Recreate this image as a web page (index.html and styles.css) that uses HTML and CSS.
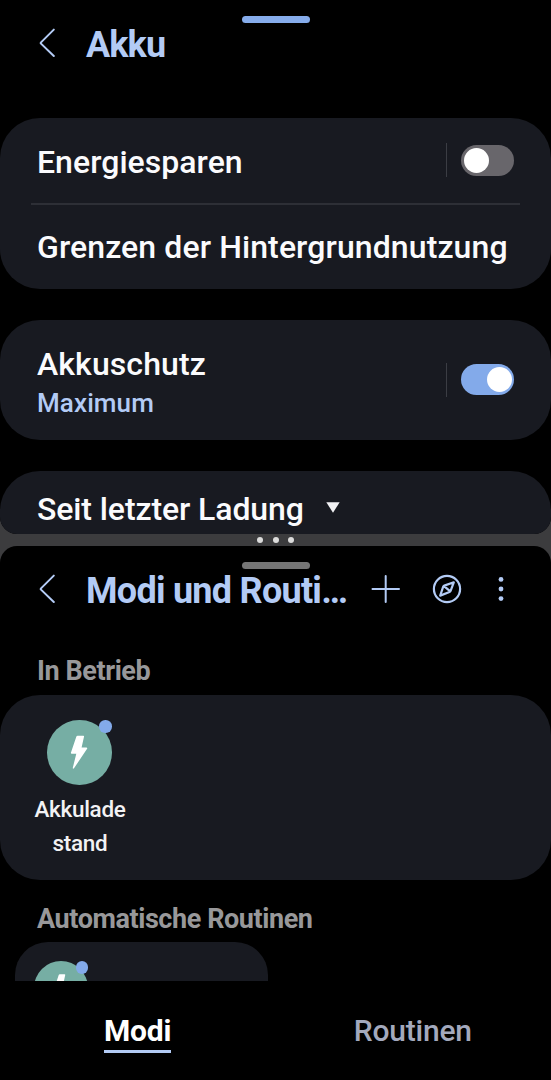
FILE: index.html
```html
<!DOCTYPE html>
<html lang="de">
<head>
<meta charset="utf-8">
<title>Akku</title>
<link rel="stylesheet" href="styles.css">
</head>
<body>
<div class="screen">
  <section class="pane pane-top">
    <span class="handle handle-active"></span>
    <header class="bar">
      <svg class="back" width="16" height="30" viewBox="0 0 16 30"><path d="M14.8 1.6 2 14.4Q1.4 15 2 15.6L14.8 28"/></svg>
      <h1 class="title title-akku">Akku</h1>
    </header>
    <div class="card power">
      <div class="row row-save">
        <span class="label saving">Energiesparen</span>
        <span class="control"><i class="toggle"></i></span>
      </div>
      <div class="row row-limits"><span class="label limits">Grenzen der Hintergrundnutzung</span></div>
    </div>
    <div class="card protect">
      <div class="stack">
        <span class="label protect-label">Akkuschutz</span>
        <span class="value">Maximum</span>
      </div>
      <span class="control"><i class="toggle on"></i></span>
    </div>
    <div class="card usage">
      <span class="label charge">Seit letzter Ladung</span>
      <svg class="caret" width="14" height="12" viewBox="0 0 14 12"><path d="M.3.3h13.4L7 10.7Z"/></svg>
    </div>
  </section>
  <div class="divider"><i></i><i></i><i></i></div>
  <section class="pane pane-bottom">
    <span class="handle"></span>
    <header class="bar bar-modes">
      <svg class="back" width="16" height="30" viewBox="0 0 16 30"><path d="M14.8 1.6 2 14.4Q1.4 15 2 15.6L14.8 28"/></svg>
      <h1 class="title title-modes">Modi und Routi…</h1>
      <svg class="plus" width="30" height="30" viewBox="0 0 30 30"><path d="M14.7 2v26M1.5 15h26.5"/></svg>
      <svg class="compass" width="30" height="30" viewBox="0 0 30 30"><circle cx="15" cy="15" r="13.1"/><path d="M21.8 8.3 18.6 16.8Q18.3 17.6 17.5 18L8.2 21.6 11.2 12.7Q11.5 11.9 12.3 11.6ZM12 12.2 18 17.2"/></svg>
      <svg class="more" width="6" height="26" viewBox="0 0 6 26"><circle cx="3" cy="3.4" r="2.4"/><circle cx="3" cy="13" r="2.4"/><circle cx="3" cy="22.6" r="2.4"/></svg>
    </header>
    <main class="content">
      <h2 class="heading running">In Betrieb</h2>
      <div class="card modes">
        <div class="mode">
          <span class="badge"><svg width="64" height="64" viewBox="0 0 64 64"><path d="M30.6 15.8h5.8q.9 0 .6.9L34.6 27.6h4.9q1.2 0 .6 1.1L27 48.3q-1.3 1-1.2-.6L29.3 33.8h-4.6q-1 0-.8-1.1L29.3 16.7q.3-.9 1.3-.9Z"/></svg><i class="dot"></i></span>
          <span class="mode-name">Akkulade<br>stand</span>
        </div>
      </div>
      <h2 class="heading automatic">Automatische Routinen</h2>
      <div class="card routine">
        <span class="badge small"><svg width="54" height="54" viewBox="0 0 64 64"><path d="M30.6 15.8h5.8q.9 0 .6.9L34.6 27.6h4.9q1.2 0 .6 1.1L27 48.3q-1.3 1-1.2-.6L29.3 33.8h-4.6q-1 0-.8-1.1L29.3 16.7q.3-.9 1.3-.9Z"/></svg><i class="dot"></i></span>
      </div>
    </main>
    <nav class="tabs">
      <span class="tab active">Modi</span>
      <span class="tab">Routinen</span>
    </nav>
  </section>
</div>
</body>
</html>
```

FILE: styles.css
```css
* { box-sizing: border-box; }
body { margin: 0; background: #3c3c3e; font-family: Roboto, sans-serif; }
h1, h2 { margin: 0; }
svg { display: block; flex: none; fill: none; }
.screen { width: 551px; height: 1080px; display: flex; flex-direction: column; overflow: hidden; }
.pane { position: relative; background: #000; overflow: hidden; flex: none; }
.pane-top { height: 534px; border-radius: 0 0 17px 17px; }
.pane-bottom { height: 534px; border-radius: 17px 17px 0 0; display: flex; flex-direction: column; }
.handle { position: absolute; left: 241.5px; top: 15.5px; width: 68px; height: 7px; border-radius: 4px; background: #757575; }
.handle-active { background: #86aceb; }
.bar { height: 118px; padding: 14px 0 0 39px; display: flex; align-items: flex-start; }
.bar-modes { height: 100px; }
.back { stroke: #b3cbf5; stroke-width: 2; stroke-linecap: round; }
.title { color: #b3cbf5; font-size: 36px; line-height: 60px; margin-top: 1px; font-weight: 700; white-space: nowrap; }
.title-akku { letter-spacing: -.9px; }
.title-modes { letter-spacing: -.73px; }
.bar .back { margin: 14px 31px 0 0; }
.bar-modes .title { margin-top: 1px; width: 260px; }
.plus { stroke: #b3cbf5; stroke-width: 2; stroke-linecap: round; margin: 14px 0 0 25px; }
.compass { stroke: #b3cbf5; stroke-width: 2.2; stroke-linejoin: round; margin: 14px 0 0 31px; }
.more { fill: #b3cbf5; margin: 16px 0 0 36px; }
.card { background: #181a21; border-radius: 40px; }
.power { height: 171px; }
.row { display: flex; justify-content: space-between; }
.row-save { height: 87px; margin: 0 31px; padding: 0 6px; border-bottom: 2px solid #2d2f36; }
.row-limits { padding-left: 37px; }
.label { color: #fbfbfd; font-size: 32px; line-height: 86px; font-weight: 500; white-space: nowrap; }
.saving { line-height: 88px; letter-spacing: .04px; }
.limits { line-height: 85px; letter-spacing: .1px; }
.control { width: 68px; height: 34px; display: flex; align-items: center; justify-content: flex-end; border-left: 1px solid #3b3d44; }
.row-save .control { margin-top: 25px; }
.toggle { width: 53.5px; height: 31px; border-radius: 16px; background: #68666b; padding: 3px; }
.toggle::before { content: ""; display: block; width: 25px; height: 25px; border-radius: 50%; background: #fff; }
.on { background: #83aaea; }
.on::before { margin-left: 23px; }
.protect { height: 120px; margin-top: 31px; padding: 0 37px 1px; display: flex; align-items: center; justify-content: space-between; }
.stack { display: flex; flex-direction: column; padding-top: 4px; }
.stack .label { line-height: 42px; letter-spacing: .1px; }
.value { color: #b3cbf5; font-size: 26px; line-height: 36px; font-weight: 500; letter-spacing: .1px; }
.usage { height: 120px; margin-top: 31px; padding-left: 37px; display: flex; align-items: flex-start; }
.usage .label { line-height: 76px; letter-spacing: -.1px; }
.caret { fill: #f1f1f4; margin: 31px 0 0 22px; }
.divider { height: 12px; display: flex; align-items: center; justify-content: center; gap: 9.5px; flex: none; }
.divider i { width: 6px; height: 6px; border-radius: 50%; background: #dcdcdc; }
.content { height: 335px; overflow: hidden; flex: none; }
.heading { padding-left: 37px; color: #98989a; font-size: 27px; font-weight: 700; line-height: 50px; height: 49px; letter-spacing: -.42px; }
.modes { height: 185px; padding: 25px 0 0 30px; }
.mode { width: 100px; display: flex; flex-direction: column; align-items: center; }
.badge { position: relative; left: -.5px; width: 64.5px; height: 64.5px; border-radius: 50%; background: #76aea4; display: block; }
.badge svg { fill: #fff; }
.dot { position: absolute; right: 0; top: 0; width: 12.5px; height: 12.5px; border-radius: 50%; background: #83aaea; }
.mode-name { margin-top: 7.5px; color: #f2f2f4; font-size: 22.5px; line-height: 34px; font-weight: 500; text-align: center; letter-spacing: -.3px; }
.automatic { height: 62px; line-height: 78px; }
.routine { width: 253px; height: 90px; margin-left: 15px; border-radius: 33px; padding: 19px 0 0 19px; }
.small { left: 0; width: 54px; height: 54px; }
.tabs { flex: 1; display: flex; align-items: flex-start; padding-top: 30px; }
.tab { font-size: 30px; line-height: 40px; font-weight: 500; color: #a3a9bd; letter-spacing: -.2px; }
.tab:first-child { margin: 0 182.5px 0 104px; }
.active { color: #fff; font-weight: 700; height: 42px; border-bottom: 3px solid #b3cbf5; }
```
